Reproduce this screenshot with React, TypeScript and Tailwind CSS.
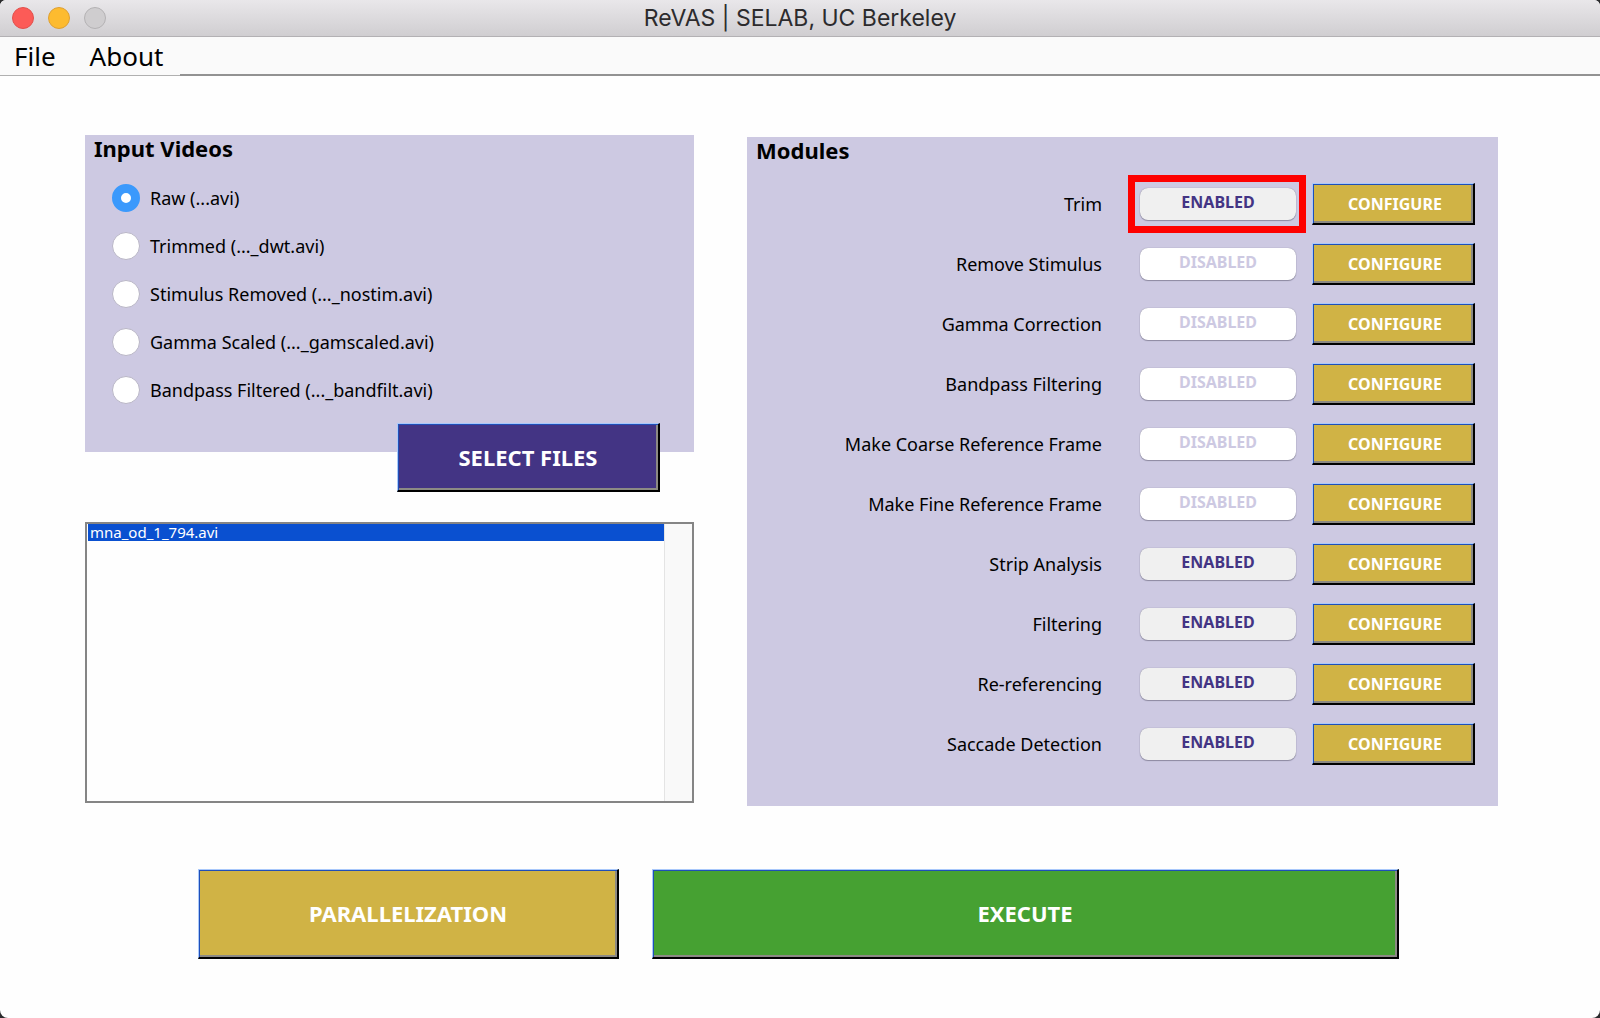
import { useState, type ReactNode } from 'react';
import clsx from 'clsx';

const inputTypes = [
  { id: 'raw', label: 'Raw (...avi)' },
  { id: 'trimmed', label: 'Trimmed (..._dwt.avi)' },
  { id: 'nostim', label: 'Stimulus Removed (..._nostim.avi)' },
  { id: 'gamscaled', label: 'Gamma Scaled (..._gamscaled.avi)' },
  { id: 'bandfilt', label: 'Bandpass Filtered (..._bandfilt.avi)' },
];

const initialModules = [
  { name: 'Trim', enabled: true, highlighted: true },
  { name: 'Remove Stimulus', enabled: false },
  { name: 'Gamma Correction', enabled: false },
  { name: 'Bandpass Filtering', enabled: false },
  { name: 'Make Coarse Reference Frame', enabled: false },
  { name: 'Make Fine Reference Frame', enabled: false },
  { name: 'Strip Analysis', enabled: true },
  { name: 'Filtering', enabled: true },
  { name: 'Re-referencing', enabled: true },
  { name: 'Saccade Detection', enabled: true },
];

/* Classic raised button: light and blue edge on the top left, grey and black on the bottom right. */
function BevelButton({ className, children }: { className: string; children: ReactNode }) {
  return (
    <button
      type="button"
      className={clsx(
        'border-t border-l border-r-2 border-b-2 border-t-[#a9c8fb] border-l-[#a9c8fb] border-r-black border-b-black text-white',
        'shadow-[inset_1px_1px_0_#1f4fb8,inset_-2px_-2px_0_#8c8a84]',
        className,
      )}
    >
      {children}
    </button>
  );
}

function TitleBar() {
  return (
    <header className="grid h-[37px] grid-cols-[1fr_auto_1fr] items-center border-b border-[#b3b1b4] bg-linear-to-b from-[#e9e7ea] to-[#d0ced1] px-3">
      <div className="flex gap-[14px]">
        <button type="button" aria-label="Close" className="size-[22px] rounded-full border border-[#e2504c] bg-[#fc5b57]" />
        <button type="button" aria-label="Minimize" className="size-[22px] rounded-full border border-[#dfa032] bg-[#fdbb2f]" />
        <button type="button" aria-label="Zoom" className="size-[22px] rounded-full border border-[#b4b2b4] bg-[#cfcdcf]" />
      </div>
      <h1 className="font-['Inter',sans-serif] text-[23px] leading-7 text-[#2c2b2d]">ReVAS | SELAB, UC Berkeley</h1>
    </header>
  );
}

function MenuBar() {
  return (
    <nav className="flex h-[39px] bg-[#fafafa] text-[26px] leading-9">
      <div className="flex items-center gap-[34px] border-b border-[#b0b0b0] pr-[17px] pl-[14px]">
        <button type="button">File</button>
        <button type="button">About</button>
      </div>
      <div className="flex-1 border-b-2 border-[#929292]" />
    </nav>
  );
}

function InputVideos() {
  const [selected, setSelected] = useState('raw');
  return (
    <section className="flex h-[317px] flex-col bg-[#cdc9e2]">
      <h2 id="input-videos" className="pl-[9px] text-[22px] leading-[26px] font-bold">
        Input Videos
      </h2>
      <div role="radiogroup" aria-labelledby="input-videos" className="mt-[13px] ml-[27px] flex flex-col">
        {inputTypes.map(({ id, label }) => (
          <label key={id} className="flex h-12 items-center gap-[10px] text-lg">
            <input
              type="radio"
              name="input-type"
              checked={selected === id}
              onChange={() => setSelected(id)}
              className="size-7 appearance-none rounded-full border border-[#b9b6c6] bg-white checked:border-[9px] checked:border-[#3b99fc]"
            />
            {label}
          </label>
        ))}
      </div>
      <BevelButton className="mt-[9px] mr-[34px] h-[69px] w-[263px] shrink-0 self-end bg-[#433484] text-[22px] font-bold">
        SELECT FILES
      </BevelButton>
    </section>
  );
}

function FileList() {
  return (
    <div className="flex h-[281px] border-2 border-[#858585]">
      <ul role="listbox" aria-label="Selected files" className="flex-1 pl-px">
        <li role="option" aria-selected="true" className="h-[17px] bg-[#0a50d0] pl-[2px] text-[15px] leading-4 text-white">
          mna_od_1_794.avi
        </li>
      </ul>
      <div className="w-7 border-l border-[#e4e4e4] bg-[#f9f9f9]" />
    </div>
  );
}

function Modules() {
  const [modules, setModules] = useState(initialModules);
  const toggle = (name: string) =>
    setModules(modules.map((m) => (m.name === name ? { ...m, enabled: !m.enabled } : m)));
  return (
    <section className="mt-[2px] h-[669px] bg-[#cdc9e2] pr-[23px]">
      <h2 className="pl-[9px] text-[22px] leading-[26px] font-bold">Modules</h2>
      <ul className="mt-[11px]">
        {modules.map(({ name, enabled, highlighted }) => (
          <li key={name} className="flex h-[60px] items-center">
            <label htmlFor={name} className="flex-1 pr-[26px] text-right text-lg">
              {name}
            </label>
            <div className={clsx('border-[7px] py-[6px] pr-[3px] pl-[5px]', highlighted ? 'border-[#fe0000]' : 'border-transparent')}>
              <button
                id={name}
                type="button"
                aria-pressed={enabled}
                onClick={() => toggle(name)}
                className={clsx(
                  'block h-8 w-[156px] rounded-lg pb-1 text-base font-bold shadow-[0_0_1px_#77758a,0_1px_1px_#8f8ca3]',
                  enabled ? 'bg-[#f0f0f0] text-[#433484]' : 'bg-white text-[#cdc9e2]',
                )}
              >
                {enabled ? 'ENABLED' : 'DISABLED'}
              </button>
            </div>
            <BevelButton className="ml-[6px] h-[42px] w-[163px] bg-[#d0b345] pl-1 text-base font-bold">CONFIGURE</BevelButton>
          </li>
        ))}
      </ul>
    </section>
  );
}

export default function App() {
  return (
    <div className="bg-[#2b2b2d]">
      <div className="flex min-h-screen flex-col overflow-hidden rounded-t-md rounded-b-lg bg-[#fefefe] font-['Noto_Sans',sans-serif] text-black">
        <TitleBar />
        <MenuBar />
        <main className="pt-[59px]">
          <div className="grid grid-cols-[609fr_751fr] gap-[53px] pr-[102px] pl-[85px]">
            <div className="flex flex-col gap-[70px]">
              <InputVideos />
              <FileList />
            </div>
            <Modules />
          </div>
          <div className="mt-[63px] grid grid-cols-[421fr_747fr] gap-[33px] pr-[201px] pl-[198px]">
            <BevelButton className="h-[90px] bg-[#d0b345] text-[22px] font-bold">PARALLELIZATION</BevelButton>
            <BevelButton className="h-[90px] bg-[#46a132] text-[22px] font-bold">EXECUTE</BevelButton>
          </div>
        </main>
      </div>
    </div>
  );
}
